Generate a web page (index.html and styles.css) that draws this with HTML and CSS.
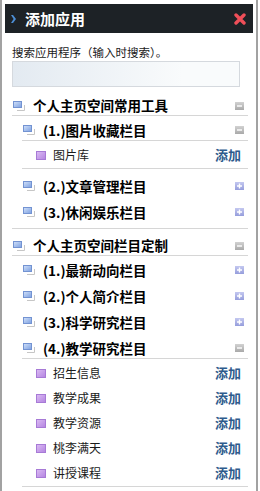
FILE: index.html
```html
<html>
<head>
<title>添加应用</title>
<meta charset="utf-8">
<link rel="stylesheet" href="styles.css">
</head>
<body>
<svg width="0" height="0" class="defs">
	<defs>
		<linearGradient id="blueSq" x1="0" y1="0" x2="1" y2="1">
			<stop offset="0" stop-color="#d3e2fa"/>
			<stop offset="1" stop-color="#7b9fe0"/>
		</linearGradient>
		<linearGradient id="purpleSq" x1="0" y1="0" x2="1" y2="1">
			<stop offset="0" stop-color="#dcbcf4"/>
			<stop offset="1" stop-color="#b383e0"/>
		</linearGradient>
		<linearGradient id="greyBox" x1="0" y1="0" x2="0" y2="1">
			<stop offset="0" stop-color="#d2d2d2"/>
			<stop offset="1" stop-color="#a9a9a9"/>
		</linearGradient>
		<linearGradient id="blueBox" x1="0" y1="0" x2="0" y2="1">
			<stop offset="0" stop-color="#c4c8f0"/>
			<stop offset="1" stop-color="#959ddc"/>
		</linearGradient>
		<symbol id="grp" viewBox="0 0 12 10">
			<path d="M4 9.5H11.5V4" fill="none" stroke="#c6c6c6"/>
			<rect x="0.5" y="0.5" width="8" height="6" fill="url(#blueSq)" stroke="#7393d2"/>
		</symbol>
		<symbol id="app" viewBox="0 0 10 9">
			<rect x="0.5" y="0.5" width="9" height="8" fill="url(#purpleSq)" stroke="#a77ad6"/>
		</symbol>
		<symbol id="minus" viewBox="0 0 9 8">
			<rect width="9" height="8" fill="url(#greyBox)"/>
			<path d="M2 4H7" stroke="#fff" stroke-width="1.4"/>
		</symbol>
		<symbol id="plus" viewBox="0 0 9 8">
			<rect width="9" height="8" fill="url(#blueBox)"/>
			<path d="M2 4H7M4.5 1.5V6.5" stroke="#fff" stroke-width="1.4"/>
		</symbol>
	</defs>
</svg>

<div class="panel">
	<div class="header">
		<svg class="arrow" width="5" height="8" viewBox="0 0 5 8"><polygon points="0,0 2,0 5,4 2,8 0,8 2.6,4" fill="#4d8fd6"/></svg>
		<span class="title">添加应用</span>
		<svg class="close" width="12" height="12" viewBox="0 0 12 12"><path d="M2 2L10 10M10 2L2 10" stroke="#ef4f59" stroke-width="3.4" stroke-linecap="round"/></svg>
	</div>

	<div class="search">
		<div class="search-label">搜索应用程序（输入时搜索）。</div>
		<input class="search-box" type="text">
	</div>

	<ul class="tree">
		<li class="group open">
			<div class="row row-group">
				<svg class="ico-grp"><use href="#grp"/></svg>
				<span class="name">个人主页空间常用工具</span>
				<svg class="toggle"><use href="#minus"/></svg>
			</div>
			<ul class="sub">
				<li class="section open">
					<div class="row row-section">
						<svg class="ico-grp"><use href="#grp"/></svg>
						<span class="name">(1.)图片收藏栏目</span>
						<svg class="toggle"><use href="#minus"/></svg>
					</div>
					<ul class="apps">
						<li class="row row-app"><svg class="ico-app"><use href="#app"/></svg><span class="name">图片库</span><a class="add">添加</a></li>
					</ul>
				</li>
				<li class="section">
					<div class="row row-section">
						<svg class="ico-grp"><use href="#grp"/></svg>
						<span class="name">(2.)文章管理栏目</span>
						<svg class="toggle"><use href="#plus"/></svg>
					</div>
				</li>
				<li class="section">
					<div class="row row-section">
						<svg class="ico-grp"><use href="#grp"/></svg>
						<span class="name">(3.)休闲娱乐栏目</span>
						<svg class="toggle"><use href="#plus"/></svg>
					</div>
				</li>
			</ul>
		</li>
		<li class="group open">
			<div class="row row-group">
				<svg class="ico-grp"><use href="#grp"/></svg>
				<span class="name">个人主页空间栏目定制</span>
				<svg class="toggle"><use href="#minus"/></svg>
			</div>
			<ul class="sub">
				<li class="section">
					<div class="row row-section">
						<svg class="ico-grp"><use href="#grp"/></svg>
						<span class="name">(1.)最新动向栏目</span>
						<svg class="toggle"><use href="#plus"/></svg>
					</div>
				</li>
				<li class="section">
					<div class="row row-section">
						<svg class="ico-grp"><use href="#grp"/></svg>
						<span class="name">(2.)个人简介栏目</span>
						<svg class="toggle"><use href="#plus"/></svg>
					</div>
				</li>
				<li class="section">
					<div class="row row-section">
						<svg class="ico-grp"><use href="#grp"/></svg>
						<span class="name">(3.)科学研究栏目</span>
						<svg class="toggle"><use href="#plus"/></svg>
					</div>
				</li>
				<li class="section open">
					<div class="row row-section">
						<svg class="ico-grp"><use href="#grp"/></svg>
						<span class="name">(4.)教学研究栏目</span>
						<svg class="toggle"><use href="#minus"/></svg>
					</div>
					<ul class="apps">
						<li class="row row-app"><svg class="ico-app"><use href="#app"/></svg><span class="name">招生信息</span><a class="add">添加</a></li>
						<li class="row row-app"><svg class="ico-app"><use href="#app"/></svg><span class="name">教学成果</span><a class="add">添加</a></li>
						<li class="row row-app"><svg class="ico-app"><use href="#app"/></svg><span class="name">教学资源</span><a class="add">添加</a></li>
						<li class="row row-app"><svg class="ico-app"><use href="#app"/></svg><span class="name">桃李满天</span><a class="add">添加</a></li>
						<li class="row row-app"><svg class="ico-app"><use href="#app"/></svg><span class="name">讲授课程</span><a class="add">添加</a></li>
					</ul>
				</li>
			</ul>
		</li>
	</ul>
</div>
</body>
</html>
```

FILE: styles.css
```css
body { margin:0; background:#fff; font-family:"Noto Sans CJK SC", "Noto Sans", sans-serif; color:#111; }
.defs { position:absolute; width:0; height:0; }

.panel { width:258px; height:491px; box-sizing:border-box; border-left:2px solid #a2a2a2; border-right:2px solid #a2a2a2; overflow:hidden; }

.header { display:flex; align-items:center; height:29px; margin:4px 3px 0 3px; padding:0 7px 0 6px; background:#1d2226; }
.header .arrow { flex:none; }
.header .title { flex:1; margin-left:9px; color:#fff; font-size:15px; font-weight:bold; line-height:29px; }
.header .close { flex:none; }

.search { padding:11px 0 0 10px; }
.search-label { height:16px; font-size:11.5px; line-height:16px; color:#1a1a1a; white-space:nowrap; }
.search-box { display:block; width:228px; height:26px; margin:1px 0 0 0; padding:0; box-sizing:border-box; border:1px solid #d5d9de; background:linear-gradient(to right, #e3eaf1, #f9fbfc 75%); outline:none; }

.tree, .tree ul { list-style:none; margin:0; padding:0; }
.tree { margin:2px 8px 0 10px; }

.row { display:flex; align-items:center; }
.row .name { flex:1; white-space:nowrap; }

.row-group { height:19px; padding-top:7px; }
.row-group .name { font-size:13.5px; font-weight:bold; line-height:19px; color:#000; }
.group.open > .row-group { border-bottom:1px solid #d6d6d6; }

.sub { padding:1px 0 3px 10px !important; }
.group.open:not(:last-child) > .sub { border-bottom:1px solid #d6d6d6; }

.row-section { height:18px; padding:4px 0 4px 0; }
.row-section .name { font-size:13.5px; font-weight:bold; line-height:18px; color:#000; }
.section.open > .row-section { padding-bottom:1px; border-bottom:1px solid #d6d6d6; }

.apps { padding-bottom:2px !important; margin-bottom:4px !important; border-bottom:1px solid #d6d6d6; }
.row-app { height:18px; padding:5px 0 2px 14px; }
.row-app .name { font-size:12px; line-height:18px; color:#1a1a1a; }

.ico-grp { width:12px; height:10px; margin:0 8px 0 1px; flex:none; }
.ico-app { width:10px; height:9px; margin-right:7px; flex:none; }
.toggle { width:9px; height:8px; margin-right:4px; flex:none; }
.add { margin-right:7px; font-size:13px; font-weight:bold; line-height:18px; color:#2e5b8c; cursor:pointer; }
```
